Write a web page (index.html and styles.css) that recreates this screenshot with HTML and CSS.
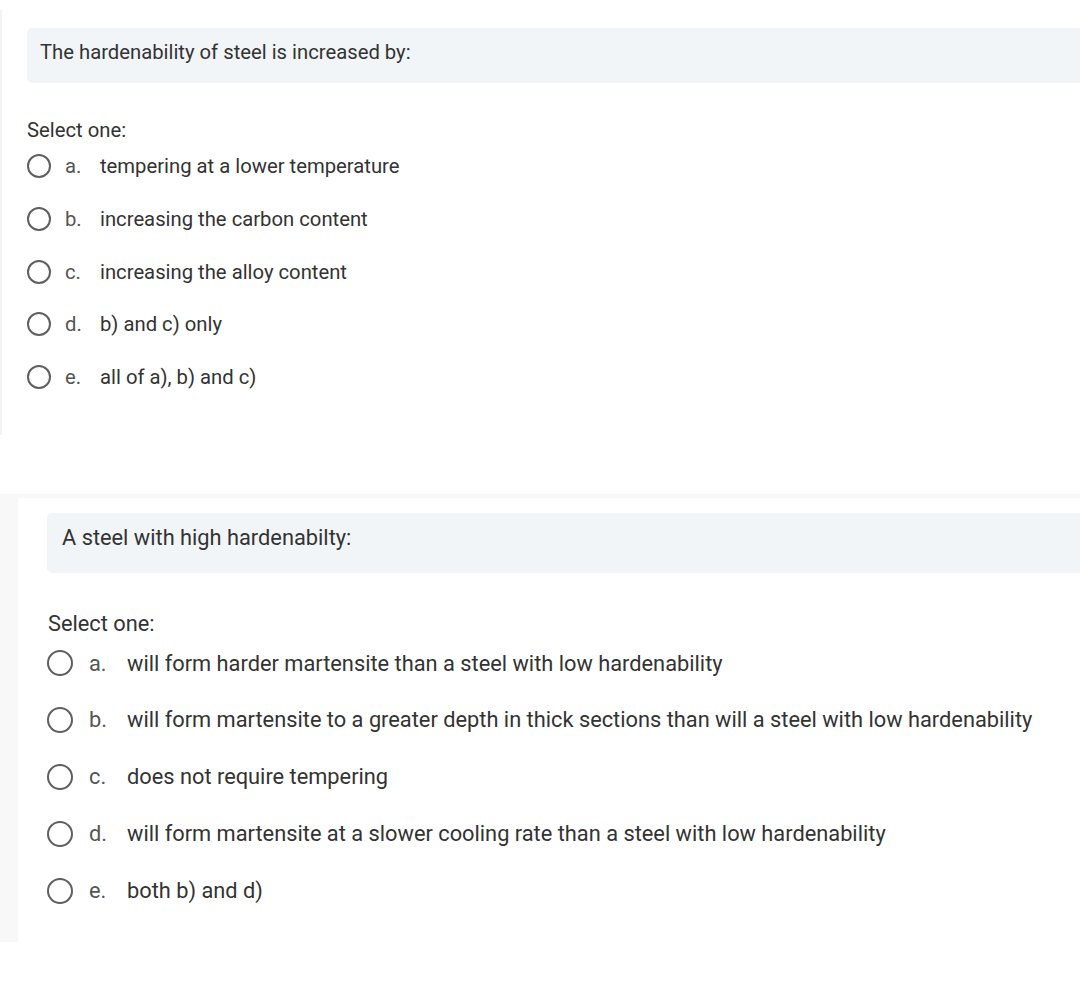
FILE: index.html
```html
<!DOCTYPE html>
<html>
<head>
<meta charset="utf-8">
<link rel="stylesheet" href="styles.css">
</head>
<body>
<div class="q q1">
  <div class="qtext">The hardenability of steel is increased by:</div>
  <div class="prompt">Select one:</div>
  <div class="answers">
    <div class="opt"><span class="radio"></span><span class="letter">a.</span><span class="label">tempering at a lower temperature</span></div>
    <div class="opt"><span class="radio"></span><span class="letter">b.</span><span class="label">increasing the carbon content</span></div>
    <div class="opt"><span class="radio"></span><span class="letter">c.</span><span class="label">increasing the alloy content</span></div>
    <div class="opt"><span class="radio"></span><span class="letter">d.</span><span class="label">b) and c) only</span></div>
    <div class="opt"><span class="radio"></span><span class="letter">e.</span><span class="label">all of a), b) and c)</span></div>
  </div>
</div>
<div class="frame">
  <div class="q q2">
    <div class="qtext">A steel with high hardenabilty:</div>
    <div class="prompt">Select one:</div>
    <div class="answers">
      <div class="opt"><span class="radio"></span><span class="letter">a.</span><span class="label">will form harder martensite than a steel with low hardenability</span></div>
      <div class="opt"><span class="radio"></span><span class="letter">b.</span><span class="label">will form martensite to a greater depth in thick sections than will a steel with low hardenability</span></div>
      <div class="opt"><span class="radio"></span><span class="letter">c.</span><span class="label">does not require tempering</span></div>
      <div class="opt"><span class="radio"></span><span class="letter">d.</span><span class="label">will form martensite at a slower cooling rate than a steel with low hardenability</span></div>
      <div class="opt"><span class="radio"></span><span class="letter">e.</span><span class="label">both b) and d)</span></div>
    </div>
  </div>
</div>
</body>
</html>
```
FILE: styles.css
```css
html, body {
  margin: 0;
  padding: 0;
  background: #ffffff;
}
body {
  font-family: Roboto, "Noto Sans", sans-serif;
  color: #333333;
  width: 1080px;
  height: 990px;
  overflow: hidden;
}
.q1 {
  margin-top: 10px;
  height: 425px;
  border-left: 2px solid #f4f4f4;
  padding: 18px 0 0 25px;
  box-sizing: border-box;
}
.qtext {
  background: #f2f5f8;
  border-radius: 5px 0 0 5px;
  display: flex;
  align-items: center;
  box-sizing: border-box;
}
.q1 .qtext {
  height: 55px;
  padding: 0 0 8px 13px;
  font-size: 20.25px;
}
.q1 .prompt {
  margin-top: 35px;
  font-size: 20.25px;
}
.answers {
  display: flex;
  flex-direction: column;
}
.opt {
  display: flex;
  align-items: center;
}
.radio {
  flex: none;
  border: 2px solid #5f5f5f;
  border-radius: 50%;
  box-sizing: border-box;
}
.letter {
  color: #555555;
}
.q1 .answers {
  margin-top: 12px;
  gap: 28.75px;
}
.q1 .opt {
  height: 24px;
  font-size: 20.25px;
}
.q1 .radio {
  width: 24px;
  height: 24px;
}
.q1 .letter {
  width: 35px;
  margin-left: 14px;
}
.frame {
  margin-top: 59px;
  background: #f8f8f8;
  padding: 4px 0 0 18px;
  height: 448px;
  box-sizing: border-box;
}
.q2 {
  background: #ffffff;
  height: 100%;
  padding: 15px 0 0 29px;
  box-sizing: border-box;
}
.q2 .qtext {
  height: 60px;
  padding: 0 0 11px 15px;
  font-size: 21.8px;
}
.q2 .prompt {
  margin-top: 38px;
  padding-left: 1px;
  font-size: 21.8px;
}
.q2 .answers {
  margin-top: 14px;
  gap: 30.9px;
}
.q2 .opt {
  height: 26px;
  font-size: 21.8px;
}
.q2 .radio {
  width: 26px;
  height: 26px;
}
.q2 .letter {
  width: 38px;
  margin-left: 16px;
}
```
